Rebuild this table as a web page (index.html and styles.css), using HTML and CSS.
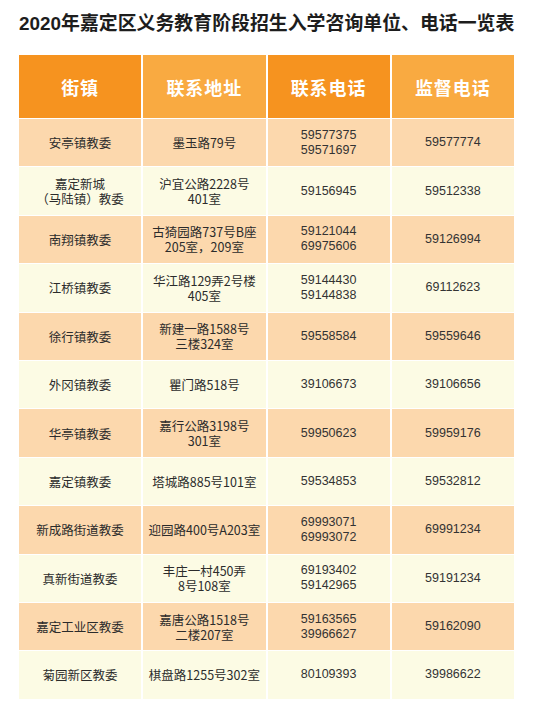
FILE: index.html
```html
<!DOCTYPE html>
<html lang="zh-CN">
<head>
<meta charset="utf-8">
<title>2020年嘉定区义务教育阶段招生入学咨询单位、电话一览表</title>
<link rel="stylesheet" href="styles.css">
</head>
<body>
<div class="page">
  <h1 class="title">2020年嘉定区义务教育阶段招生入学咨询单位、电话一览表</h1>
  <div class="table">
    <div class="th dark">街镇</div>
    <div class="th light">联系地址</div>
    <div class="th dark">联系电话</div>
    <div class="th light">监督电话</div>

    <div class="td odd">安亭镇教委</div>
    <div class="td odd">墨玉路79号</div>
    <div class="td odd num">59577375<br>59571697</div>
    <div class="td odd num">59577774</div>

    <div class="td even">嘉定新城<br>（马陆镇）教委</div>
    <div class="td even">沪宜公路2228号<br>401室</div>
    <div class="td even num">59156945</div>
    <div class="td even num">59512338</div>

    <div class="td odd">南翔镇教委</div>
    <div class="td odd">古猗园路737号B座<br>205室，209室</div>
    <div class="td odd num">59121044<br>69975606</div>
    <div class="td odd num">59126994</div>

    <div class="td even">江桥镇教委</div>
    <div class="td even">华江路129弄2号楼<br>405室</div>
    <div class="td even num">59144430<br>59144838</div>
    <div class="td even num">69112623</div>

    <div class="td odd">徐行镇教委</div>
    <div class="td odd">新建一路1588号<br>三楼324室</div>
    <div class="td odd num">59558584</div>
    <div class="td odd num">59559646</div>

    <div class="td even">外冈镇教委</div>
    <div class="td even">瞿门路518号</div>
    <div class="td even num">39106673</div>
    <div class="td even num">39106656</div>

    <div class="td odd">华亭镇教委</div>
    <div class="td odd">嘉行公路3198号<br>301室</div>
    <div class="td odd num">59950623</div>
    <div class="td odd num">59959176</div>

    <div class="td even">嘉定镇教委</div>
    <div class="td even">塔城路885号101室</div>
    <div class="td even num">59534853</div>
    <div class="td even num">59532812</div>

    <div class="td odd">新成路街道教委</div>
    <div class="td odd">迎园路400号A203室</div>
    <div class="td odd num">69993071<br>69993072</div>
    <div class="td odd num">69991234</div>

    <div class="td even">真新街道教委</div>
    <div class="td even">丰庄一村450弄<br>8号108室</div>
    <div class="td even num">69193402<br>59142965</div>
    <div class="td even num">59191234</div>

    <div class="td odd">嘉定工业区教委</div>
    <div class="td odd">嘉唐公路1518号<br>二楼207室</div>
    <div class="td odd num">59163565<br>39966627</div>
    <div class="td odd num">59162090</div>

    <div class="td even">菊园新区教委</div>
    <div class="td even">棋盘路1255号302室</div>
    <div class="td even num">80109393</div>
    <div class="td even num">39986622</div>
  </div>
</div>
</body>
</html>
```

FILE: styles.css
```css
html, body {
  margin: 0;
  padding: 0;
  background: #ffffff;
}

.page {
  width: 534px;
  padding: 12px 20px 0 19px;
  box-sizing: border-box;
  font-family: "Liberation Sans", "Noto Sans CJK SC", sans-serif;
}

.title {
  margin: 0;
  height: 24px;
  line-height: 24px;
  font-size: 18.9px;
  font-weight: bold;
  color: #1d1d1d;
  white-space: nowrap;
  font-family: "Liberation Sans", "Noto Sans CJK SC", sans-serif;
}

.table {
  margin-top: 19px;
  width: 495px;
  display: grid;
  grid-template-columns: repeat(4, 1fr);
  grid-template-rows: 63px repeat(12, 47.4px);
  column-gap: 2px;
  row-gap: 1px;
  background: #ffffff;
}

.th {
  display: flex;
  align-items: center;
  justify-content: center;
  color: #ffffff;
  font-size: 18px;
  font-weight: bold;
  letter-spacing: 1px;
  font-family: "Noto Sans CJK SC", sans-serif;
}

.th.dark {
  background: #f6931f;
}

.th.light {
  background: #f9aa41;
}

.td {
  display: flex;
  align-items: center;
  justify-content: center;
  text-align: center;
  font-size: 12.5px;
  line-height: 15px;
  color: #2b2b2b;
  font-family: "Noto Sans CJK SC", sans-serif;
}

.td.num {
  font-family: "Liberation Sans", Arial, sans-serif;
  font-size: 12.5px;
  color: #333333;
}

.td.odd {
  background: #fcd8ad;
}

.td.even {
  background: #fcfbe4;
}
```
